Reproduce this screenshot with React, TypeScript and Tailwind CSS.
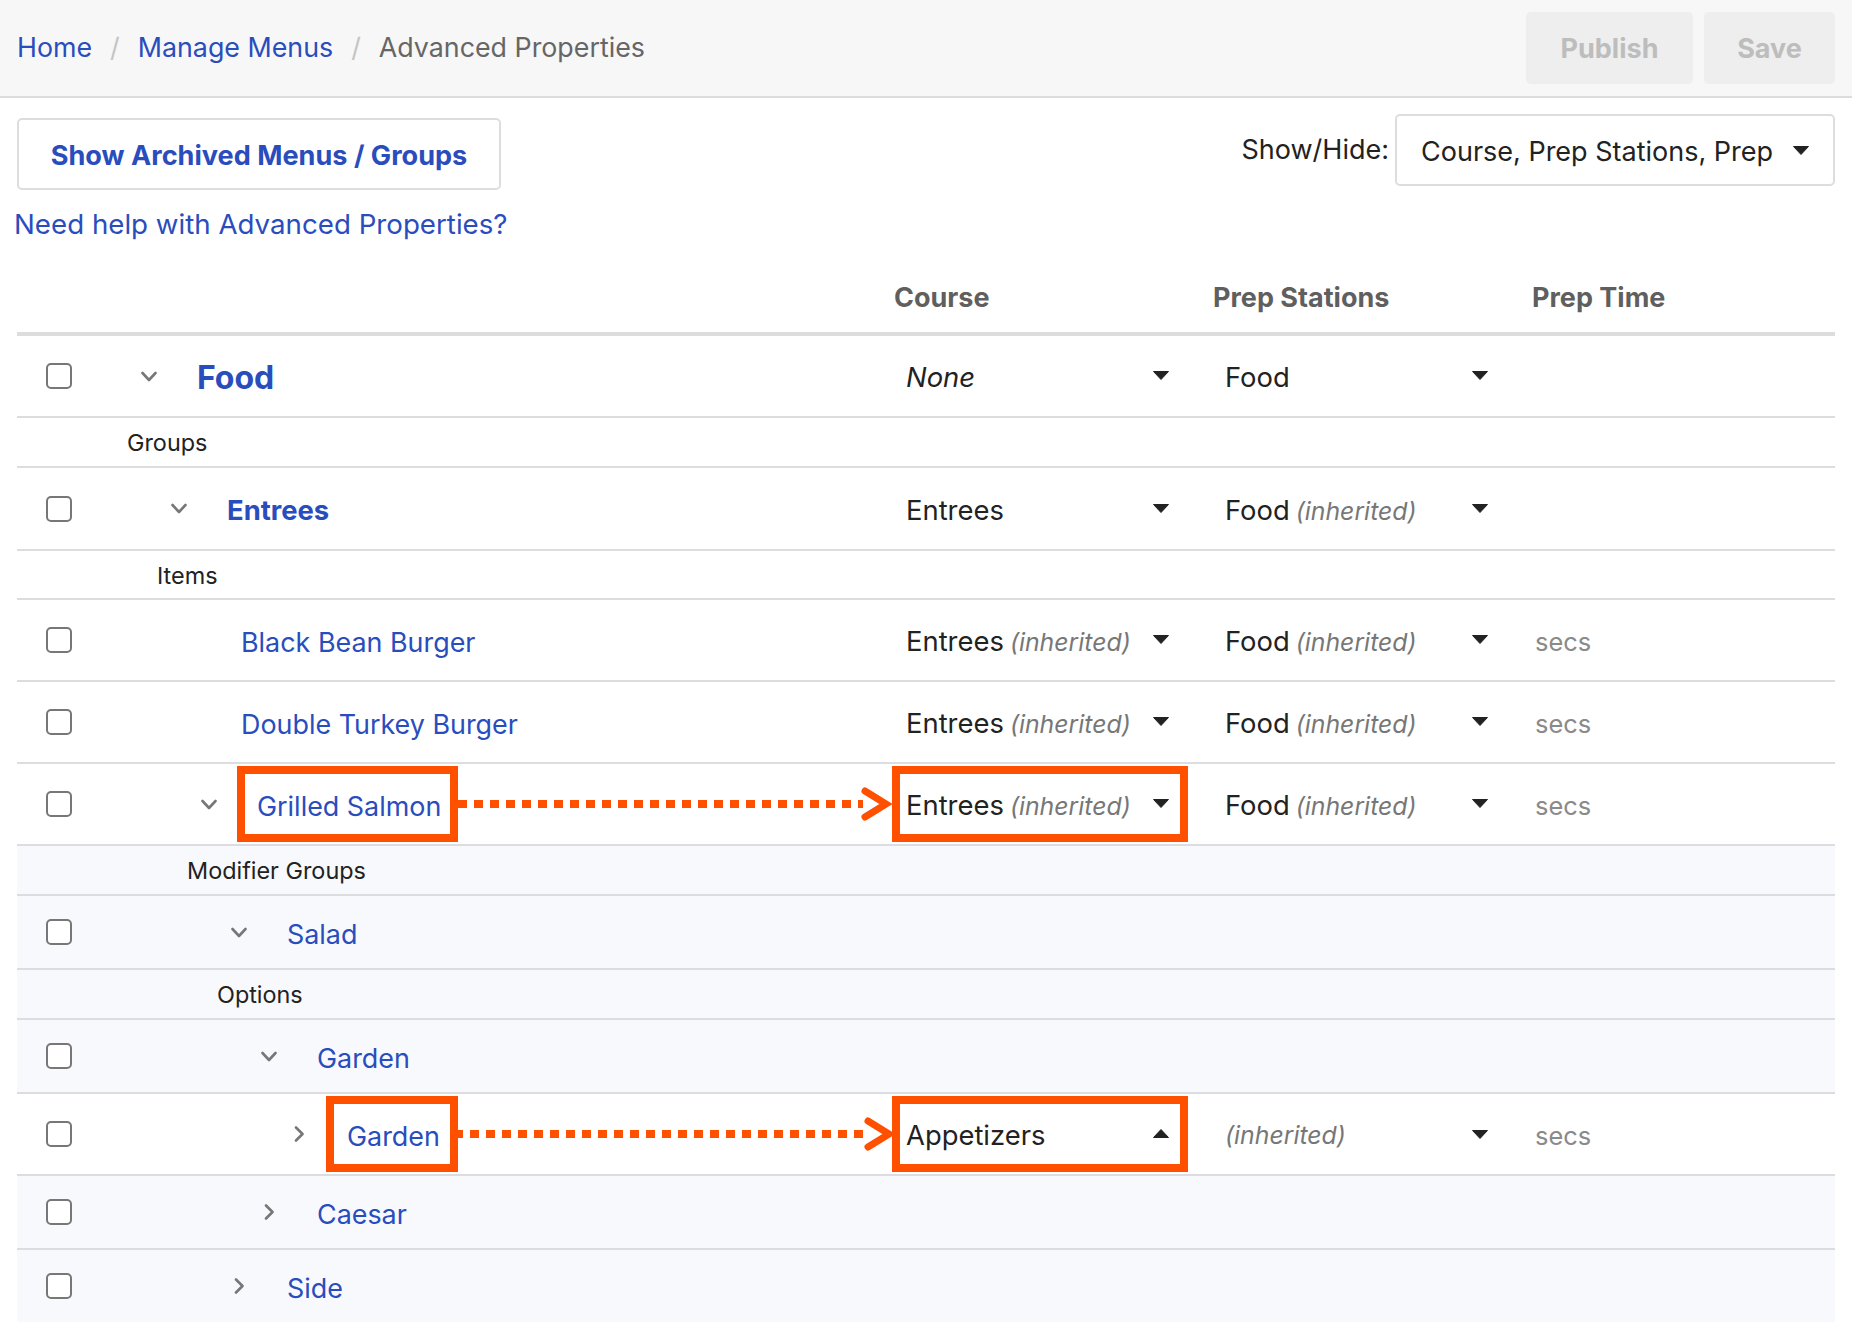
import React from "react";

const BLUE = "text-[#2a4dbd]";

function Caret({ up = false }: { up?: boolean }) {
  return (
    <svg width="16" height="9" viewBox="0 0 16 9" className="shrink-0">
      <path d={up ? "M0.5 8.5 L8 0.5 L15.5 8.5 Z" : "M0.5 0.5 L15.5 0.5 L8 8.5 Z"} fill="#222" stroke="#222" strokeWidth="1" strokeLinejoin="round" />
    </svg>
  );
}

function Chevron({ open }: { open: boolean }) {
  return (
    <svg width="16" height="16" viewBox="0 0 16 16" className="shrink-0" fill="none" stroke="#777" strokeWidth="2.6" strokeLinecap="round" strokeLinejoin="round">
      {open ? <path d="M1.5 5 L8 12 L14.5 5" /> : <path d="M5 1.5 L11.5 8 L5 14.5" />}
    </svg>
  );
}

function Checkbox() {
  return <span className="block w-[26px] h-[26px] shrink-0 rounded-[5px] border-2 border-[#777] bg-white" />;
}

function Value({ main, inherited, italic }: { main?: string; inherited?: boolean; italic?: boolean }) {
  return (
    <span className="flex items-baseline gap-[6px] whitespace-nowrap pt-[4px]">
      {main && <span className={`text-[#222] text-[27.4px] ${italic ? "italic" : ""}`}>{main}</span>}
      {inherited && <span className="text-[#777] text-[24.8px] italic">(inherited)</span>}
    </span>
  );
}

type RowProps = {
  h: string;
  pl: string;
  bg: string;
  chevron?: "open" | "closed";
  name: string;
  nameCls?: string;
  course?: { main?: string; inherited?: boolean; italic?: boolean; up?: boolean };
  prep?: { main?: string; inherited?: boolean };
  secs?: boolean;
};

function Row({ h, pl, bg, chevron, name, nameCls, course, prep, secs }: RowProps) {
  return (
    <div className={`flex items-center border-b-2 border-[#dddddf] pl-[29px] ${h} ${bg}`}>
      <Checkbox />
      <div className={`w-[822px] flex items-center ${pl}`}>
        {chevron && <Chevron open={chevron === "open"} />}
        <span className={`pt-[4px] ${chevron ? "ml-[40px]" : ""} ${nameCls ?? `text-[26.9px] ${BLUE}`}`}>{name}</span>
      </div>
      <div className="w-[319px] pl-[12px] pr-[44px] flex items-center justify-between">
        {course && (
          <>
            <Value main={course.main} inherited={course.inherited} italic={course.italic} />
            <Caret up={course.up} />
          </>
        )}
      </div>
      <div className="w-[319px] pl-[12px] pr-[44px] flex items-center justify-between">
        {prep && (
          <>
            <Value main={prep.main} inherited={prep.inherited} />
            <Caret />
          </>
        )}
      </div>
      <div className="pl-[3px] pt-[4px] text-[25.4px] text-[#8a8a8a]">{secs ? "secs" : ""}</div>
    </div>
  );
}

function Label({ h, pl, bg, text }: { h: string; pl: string; bg: string; text: string }) {
  return (
    <div className={`flex items-center border-b-2 border-[#dddddf] pt-[2px] text-[23.4px] text-[#222] ${h} ${pl} ${bg}`}>{text}</div>
  );
}

function Arrow({ top, tip, offset }: { top: string; tip: number; offset: number }) {
  const x = tip - 458;
  return (
    <svg className={`absolute left-[458px] ${top}`} width="440" height="40" viewBox="0 0 440 40" fill="none" stroke="#ff5000">
      <path d={`M0 20 L${x - 27} 20`} strokeWidth="8" strokeDasharray="9 7" strokeDashoffset={offset} />
      <path d={`M${x - 25} 7 L${x - 4} 20 L${x - 25} 33`} strokeWidth="7" strokeLinecap="round" strokeLinejoin="miter" />
    </svg>
  );
}

const W = "bg-white";
const T = "bg-[#f7f9fc]";

export default function App() {
  const inh = { main: "Entrees", inherited: true };
  const food = { main: "Food", inherited: true };
  return (
    <div className="relative w-[1852px] h-[1322px] overflow-hidden bg-white font-['Inter',sans-serif]">
      <header className="h-[98px] flex items-center justify-between pl-[17px] pr-[17px] bg-[#f7f7f7] border-b-2 border-[#dcdcdc]">
        <nav className="flex items-center text-[26.8px] -mt-[2px]">
          <span className={BLUE}>Home</span>
          <span className="text-[#c4c4c4] mx-[18px]">/</span>
          <span className={BLUE}>Manage Menus</span>
          <span className="text-[#c4c4c4] mx-[18px]">/</span>
          <span className="text-[#666]">Advanced Properties</span>
        </nav>
        <div className="flex gap-[11px]">
          <button className="w-[167px] h-[72px] rounded-[5px] bg-[#eeeeee] text-[#bdbdbd] font-bold text-[27px] pt-[2px]">Publish</button>
          <button className="w-[131px] h-[72px] rounded-[5px] bg-[#eeeeee] text-[#bdbdbd] font-bold text-[27px] pt-[2px]">Save</button>
        </div>
      </header>

      <div className="px-[17px] flex justify-between items-start pt-[16px] h-[110px]">
        <button className={`mt-[4px] w-[484px] h-[72px] rounded-[5px] border-2 border-[#dddddd] bg-white font-bold text-[27.1px] pt-[4px] ${BLUE}`}>
          Show Archived Menus / Groups
        </button>
        <div className="flex items-center gap-[6px]">
          <span className="text-[27px] text-[#222] pt-[1px]">Show/Hide:</span>
          <div className="w-[440px] h-[72px] rounded-[5px] border-2 border-[#dddddd] flex items-center justify-between pl-[24px] pr-[24px]">
            <span className="text-[27px] text-[#222] pt-[5px]">Course, Prep Stations, Prep</span>
            <Caret />
          </div>
        </div>
      </div>

      <div className={`pl-[14px] -mt-[5px] h-[44px] flex items-center text-[27.7px] ${BLUE}`}>Need help with Advanced Properties?</div>

      <section className="mx-[17px] mt-[23px]">
        <div className="flex items-center h-[66px] border-b-4 border-[#dddddd] pb-[6px] font-bold text-[27px] text-[#5f5f5f]">
          <span className="w-[877px]" />
          <span className="w-[319px]">Course</span>
          <span className="w-[319px]">Prep Stations</span>
          <span>Prep Time</span>
        </div>
        <Row h="h-[82px]" pl="pl-[69px]" bg={W} chevron="open" name="Food" nameCls={`text-[32px] font-bold ${BLUE}`} course={{ main: "None", italic: true }} prep={{ main: "Food" }} />
        <Label h="h-[50px]" pl="pl-[110px]" bg={W} text="Groups" />
        <Row h="h-[83px]" pl="pl-[99px]" bg={W} chevron="open" name="Entrees" nameCls={`text-[27.4px] font-bold ${BLUE}`} course={{ main: "Entrees" }} prep={food} />
        <Label h="h-[49px]" pl="pl-[140px]" bg={W} text="Items" />
        <Row h="h-[82px]" pl="pl-[169px]" bg={W} name="Black Bean Burger" course={inh} prep={food} secs />
        <Row h="h-[82px]" pl="pl-[169px]" bg={W} name="Double Turkey Burger" course={inh} prep={food} secs />
        <Row h="h-[82px]" pl="pl-[129px]" bg={W} chevron="open" name="Grilled Salmon" course={inh} prep={food} secs />
        <Label h="h-[50px]" pl="pl-[170px]" bg={T} text="Modifier Groups" />
        <Row h="h-[74px]" pl="pl-[159px]" bg={T} chevron="open" name="Salad" />
        <Label h="h-[50px]" pl="pl-[200px]" bg={T} text="Options" />
        <Row h="h-[74px]" pl="pl-[189px]" bg={T} chevron="open" name="Garden" />
        <Row h="h-[82px]" pl="pl-[219px]" bg={W} chevron="closed" name="Garden" course={{ main: "Appetizers", up: true }} prep={{ inherited: true }} secs />
        <Row h="h-[74px]" pl="pl-[189px]" bg={T} chevron="closed" name="Caesar" />
        <Row h="h-[74px]" pl="pl-[159px]" bg={T} chevron="closed" name="Side" />
      </section>

      <div className="absolute left-[237px] top-[766px] w-[221px] h-[76px] border-8 border-[#ff5000]" />
      <div className="absolute left-[326px] top-[1096px] w-[132px] h-[76px] border-8 border-[#ff5000]" />
      <div className="absolute left-[892px] top-[766px] w-[296px] h-[76px] border-8 border-[#ff5000]" />
      <div className="absolute left-[892px] top-[1096px] w-[296px] h-[76px] border-8 border-[#ff5000]" />
      <Arrow top="top-[784px]" tip={890} offset={0} />
      <Arrow top="top-[1114px]" tip={893} offset={4} />
    </div>
  );
}
